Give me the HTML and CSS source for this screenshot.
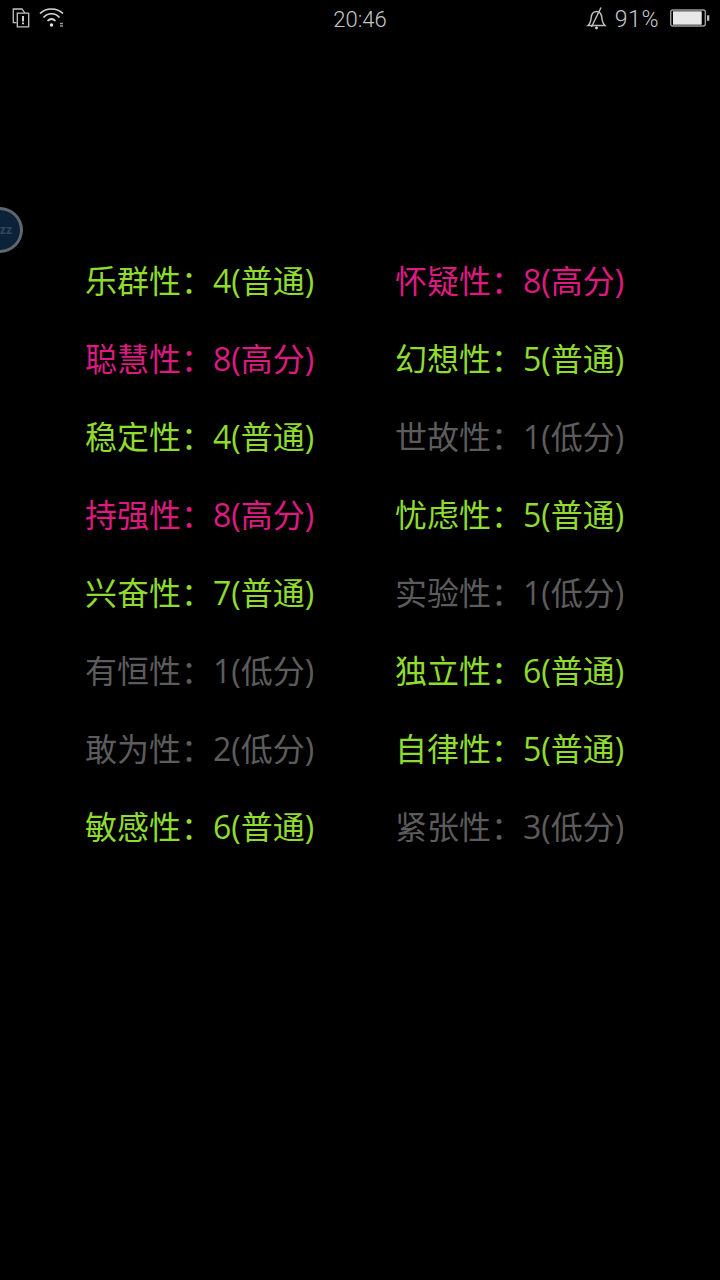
FILE: index.html
```
<!DOCTYPE html>
<html lang="zh">
<head>
<meta charset="utf-8">
<title>结果</title>
<link rel="stylesheet" href="styles.css">
</head>
<body>
<div class="status">
  <div class="status-left">
    <svg class="ic-sim" width="20" height="22" viewBox="0 0 20 22" fill="none" stroke="#c4c4c4" stroke-width="1.3"><path d="M6.500 14.700H3.300V1h8.700l2.800 4"/><path d="M7.300 5.200h11.400v13.600H7.300z" fill="#000"/><path d="M13 8v5.500M13 14.500v1.800" stroke="#e6e6e6" stroke-width="1.800"/></svg>
    <svg class="ic-wifi" width="26" height="22" viewBox="0 0 26 22" fill="none" stroke="#d8d8d8" stroke-width="1.700"><path d="M1 5.500C7-.5 18-.5 24 5.500"/><path d="M4.500 9.500C9 4.500 16 4.500 20.500 9.500"/><path d="M8.500 13C11 10.500 14 10.500 16.500 13"/><circle cx="12.500" cy="17" r="1.700" fill="#e6e6e6" stroke="none"/><path d="M21 15.500h3M21 18h3" stroke="#9a9a9a" stroke-width="1.300"/></svg>
  </div>
  <div class="clock">20:46</div>
  <div class="status-right">
    <svg class="ic-bell" width="22" height="24" viewBox="0 0 22 24" fill="none" stroke="#bdbdbd" stroke-width="1.500"><path d="M2 19.500c2.200-2 2.800-4 3.200-8 .4-3.800 2.600-6 5.300-6s4.900 2.200 5.300 6c.4 4 1 6 3.200 8z"/><path d="M5.500 21L15 1.500"/><circle cx="10.500" cy="22" r="1.400" fill="#d8d8d8" stroke="none"/></svg>
    <span class="pct">91%</span>
    <svg class="ic-batt" width="42" height="20" viewBox="0 0 42 20"><rect x=".7" y="1" width="34.600" height="16" rx="2" fill="none" stroke="#9c9c9c" stroke-width="1.400"/><rect x="3" y="2.300" width="28.700" height="13.400" fill="#e8e8e8"/><rect x="37" y="6.300" width="2.300" height="5.500" fill="#bdbdbd"/></svg>
  </div>
</div>

<div class="floater"><span class="floater-text">zz</span></div>

<div class="grid">
  <div class="item normal">乐群性：4(普通)</div>
  <div class="item high">怀疑性：8(高分)</div>
  <div class="item high">聪慧性：8(高分)</div>
  <div class="item normal">幻想性：5(普通)</div>
  <div class="item normal">稳定性：4(普通)</div>
  <div class="item low">世故性：1(低分)</div>
  <div class="item high">持强性：8(高分)</div>
  <div class="item normal">忧虑性：5(普通)</div>
  <div class="item normal">兴奋性：7(普通)</div>
  <div class="item low">实验性：1(低分)</div>
  <div class="item low">有恒性：1(低分)</div>
  <div class="item normal">独立性：6(普通)</div>
  <div class="item low">敢为性：2(低分)</div>
  <div class="item normal">自律性：5(普通)</div>
  <div class="item normal">敏感性：6(普通)</div>
  <div class="item low">紧张性：3(低分)</div>
</div>
</body>
</html>
```
FILE: styles.css
```
* { box-sizing: border-box; }
html, body { margin: 0; padding: 0; background: #000; }
body {
  width: 720px;
  height: 1280px;
  overflow: hidden;
  position: relative;
  font-family: "Roboto", "Noto Sans CJK SC", sans-serif;
}
.status {
  height: 40px;
  display: flex;
  align-items: center;
  justify-content: space-between;
  padding: 0 8px 2px 10px;
  position: relative;
  color: #c8c8c8;
}
.status-left, .status-right { display: flex; align-items: center; }
.ic-wifi { margin-left: 9px; }
.clock {
  position: absolute;
  left: 0;
  right: 0;
  text-align: center;
  font-size: 22px;
  font-weight: 300;
}
.ic-bell { margin-top: -2px; }
.pct { font-size: 23px; font-weight: 300; margin: 0 11px 0 7px; letter-spacing: .6px; }
.floater {
  position: absolute;
  left: -24px;
  top: 207px;
  width: 47px;
  height: 46px;
  border-radius: 50%;
  background: #0b2238;
  border: 3px solid #5f6670;
  display: flex;
  align-items: center;
  justify-content: flex-end;
  padding-right: 8px;
}
.floater-text { color: #33465a; font-size: 12px; font-weight: 700; }
.grid {
  display: grid;
  grid-template-columns: 310px 310px;
  grid-auto-rows: 78px;
  padding: 202px 0 0 85px;
}
.item {
  font-family: "Open Sans", "Noto Sans CJK SC", sans-serif;
  font-size: 32px;
  font-weight: 400;
  line-height: 78px;
  white-space: nowrap;
}
.normal { color: #8fdb2e; }
.high { color: #dc1a80; }
.low { color: #5c5c5c; }
```
